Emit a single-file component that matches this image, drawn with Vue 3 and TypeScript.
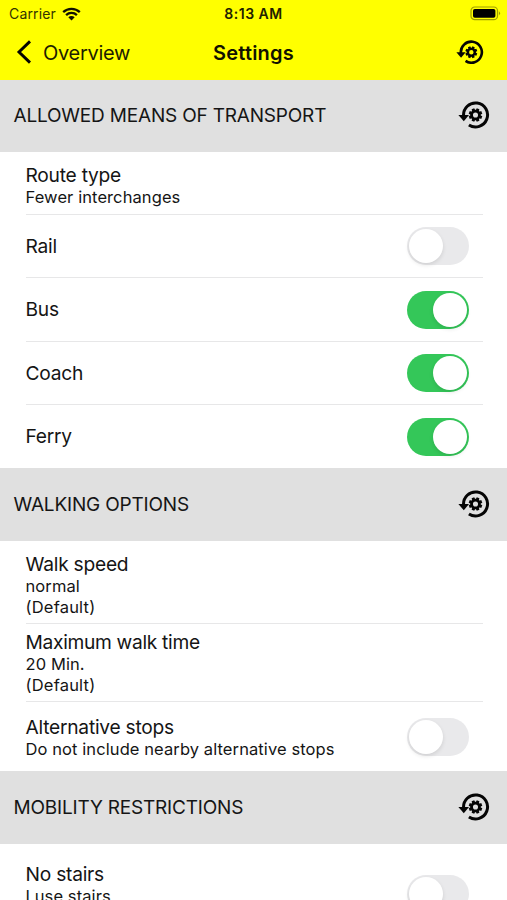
<script setup lang="ts">
interface Row {
  title: string
  details?: string[]
  on?: boolean
  height: number
  cls: string
}
interface Section {
  heading: string
  cls: string
  rows: Row[]
}

const sections: Section[] = [
  {
    heading: 'ALLOWED MEANS OF TRANSPORT',
    cls: 'transport',
    rows: [
      { title: 'Route type', details: ['Fewer interchanges'], height: 62.5, cls: 'route' },
      { title: 'Rail', on: false, height: 63.5, cls: 'single' },
      { title: 'Bus', on: true, height: 63.5, cls: 'single' },
      { title: 'Coach', on: true, height: 63.5, cls: 'single' },
      { title: 'Ferry', on: true, height: 63, cls: 'single' },
    ],
  },
  {
    heading: 'WALKING OPTIONS',
    cls: 'walking',
    rows: [
      { title: 'Walk speed', details: ['normal', '(Default)'], height: 83, cls: 'speed' },
      { title: 'Maximum walk time', details: ['20 Min.', '(Default)'], height: 78, cls: 'time' },
      { title: 'Alternative stops', details: ['Do not include nearby alternative stops'], on: false, height: 69, cls: 'stops' },
    ],
  },
  {
    heading: 'MOBILITY RESTRICTIONS',
    cls: 'mobility',
    rows: [
      { title: 'No stairs', details: ['I use stairs'], on: false, height: 95, cls: 'stairs' },
    ],
  },
]

const teeth = [0, 45, 90, 135, 180, 225, 270, 315]
</script>

<template>
  <main class="screen">
    <svg class="defs" width="0" height="0" aria-hidden="true">
      <symbol id="reset-gear" viewBox="0 0 32 28">
        <path d="M5.6 15A12 12 0 1 1 10.9 23.9" fill="none" stroke="#050505" stroke-width="3" />
        <path d="M.4 13.9H11L5.8 20.3Z" fill="#050505" />
        <circle cx="17.5" cy="14" r="3.9" fill="none" stroke="#050505" stroke-width="2.7" />
        <path
          v-for="angle in teeth"
          :key="angle"
          d="M16.1 7.2H18.9L19.2 10H15.8Z"
          fill="#050505"
          :transform="`rotate(${angle + 22.5} 17.5 14)`"
        />
      </symbol>
    </svg>
    <header class="top">
      <div class="status">
        <div class="carrier">
          <span class="carrier-name">Carrier</span>
          <svg class="wifi" width="19" height="14" viewBox="0 0 19 14" aria-hidden="true">
            <path d="M1.2 5.1C5.8.7 13.2.7 17.8 5.1M4.1 8.1C7.1 5.2 11.9 5.2 14.9 8.1" fill="none" stroke="#111100" stroke-width="2.3" />
            <path d="M6.3 10.3C8.1 8.6 10.9 8.6 12.7 10.3L9.5 13.4Z" fill="#111100" />
          </svg>
        </div>
        <span class="clock">8:13 AM</span>
        <svg class="battery" width="31" height="15" viewBox="0 0 31 15" aria-hidden="true">
          <rect x="1" y="1" width="26.5" height="12.6" rx="3.7" fill="none" stroke="#000" stroke-opacity=".38" stroke-width="1.2" />
          <rect x="3" y="3" width="22.4" height="8.7" rx="1.8" />
          <path d="M28.9 5.2Q31.2 7.3 28.9 9.4Z" fill-opacity=".4" />
        </svg>
      </div>
      <nav class="nav">
        <div class="back">
          <svg width="16" height="24" viewBox="0 0 16 24" aria-hidden="true">
            <path d="M14 1.4L3 12L14 22.6" fill="none" stroke="#050500" stroke-width="2.9" />
          </svg>
          <span class="back-label">Overview</span>
        </div>
        <h1 class="title">Settings</h1>
        <svg class="nav-reset" width="28" height="24.5"><use href="#reset-gear" /></svg>
      </nav>
    </header>
    <section v-for="section in sections" :key="section.heading" class="group">
      <div class="heading" :class="section.cls">
        <h2>{{ section.heading }}</h2>
        <svg width="32" height="28"><use href="#reset-gear" /></svg>
      </div>
      <div class="rows">
        <div v-for="row in section.rows" :key="row.title" class="row" :class="row.cls" :style="{ height: row.height + 'px' }">
          <div class="copy">
            <div class="name">{{ row.title }}</div>
            <div v-for="detail in row.details" :key="detail" class="detail">{{ detail }}</div>
          </div>
          <div v-if="row.on !== undefined" class="switch" :class="{ on: row.on }"><i /></div>
        </div>
      </div>
    </section>
  </main>
</template>

<style>
body {
  background: #fff;
  overflow: hidden;
}
</style>

<style scoped>
.screen {
  width: 507px;
  height: 900px;
  overflow: hidden;
  background: #fff;
  color: #151515;
  font-family: Inter, "Liberation Sans", sans-serif;
}
.defs { display: block; }
.top { height: 79.5px; background: #ff0; }
.status {
  display: grid;
  grid-template-columns: 1fr auto 1fr;
  height: 27px;
  padding: 0 6px 0 9px;
  align-items: center;
  font-size: 14px;
}
.carrier { display: flex; align-items: center; gap: 6px; color: #333300; }
.carrier-name { letter-spacing: .15px; }
.clock { margin: 0 2px 0 -1px; font-weight: 600; font-size: 14px; letter-spacing: .5px; color: #222200; }
.battery { justify-self: end; }
.nav {
  display: grid;
  grid-template-columns: 1fr auto 1fr;
  height: 50px;
  padding: 0 16px;
  align-items: center;
}
.back { display: flex; align-items: center; gap: 11px; font-size: 20px; color: #1d1d00; }
.back-label { letter-spacing: -.3px; }
.title { margin: 0; font-size: 20px; font-weight: 600; letter-spacing: .2px; color: #111100; }
.back-label, .title { padding-top: 1px; }
.nav-reset { justify-self: end; margin-right: 7.5px; }
.heading {
  display: flex;
  justify-content: space-between;
  align-items: center;
  height: 72.8px;
  box-sizing: border-box;
  padding: 0 17px 0 13.5px;
  background: #e0e0e0;
}
.heading svg { margin-bottom: 2px; }
.mobility svg { margin-bottom: 0; }
h2 { margin: 0; font-size: 19px; font-weight: 400; letter-spacing: -.19px; white-space: nowrap; }
.row {
  display: flex;
  justify-content: space-between;
  align-items: center;
  box-sizing: border-box;
  margin: 0 24px 0 25.5px;
  padding-right: 14px;
  border-bottom: 1.5px solid #e7e7e8;
}
.row:first-child { padding-top: 5px; }
.row:last-child { border-bottom: 0; }
.copy { white-space: nowrap; }
.single .copy { padding-bottom: 1px; }
.stops .copy { padding-top: 1.5px; }
.stairs .copy { min-height: 63px; }
.name { font-size: 19.2px; line-height: 24px; letter-spacing: -.24px; }
.time .name { letter-spacing: -.31px; }
.detail { font-size: 16.5px; line-height: 20.5px; letter-spacing: .09px; }
.detail:nth-child(3) { letter-spacing: .2px; }
.switch {
  flex: none;
  box-sizing: border-box;
  width: 62.5px;
  height: 38px;
  padding: 2px;
  border-radius: 19px;
  background: #e9e9eb;
}
.switch i {
  display: block;
  width: 34px;
  height: 34px;
  border-radius: 50%;
  background: #fff;
  box-shadow: 0 2px 4px #0000001c;
}
.switch.on { background: #34c759; }
.switch.on i { margin-left: auto; }
</style>
